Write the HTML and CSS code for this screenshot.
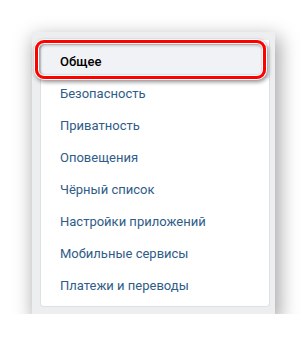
FILE: index.html
```html
<!DOCTYPE html>
<html>
<head>
  <title>Настройки</title>
  <link rel="stylesheet" href="styles.css">
</head>
<body>
  <div class="frame">
    <div class="menu-card">
      <a class="menu-item selected">Общее</a>
      <a class="menu-item">Безопасность</a>
      <a class="menu-item">Приватность</a>
      <a class="menu-item">Оповещения</a>
      <a class="menu-item">Чёрный список</a>
      <a class="menu-item">Настройки приложений</a>
      <a class="menu-item">Мобильные сервисы</a>
      <a class="menu-item">Платежи и переводы</a>
    </div>
    <!-- red marker around the active item -->
    <div class="highlight"></div>
  </div>
</body>
</html>
```

FILE: styles.css
```css
/* Settings menu screenshot */
body {
  margin: 0;
  background-color: #fff;
  font-family: Roboto, "Liberation Sans", sans-serif;
}

.frame {
  position: relative;
  width: 243px;
  height: 282px;
  margin: 32px 0 0 32px;
  padding: 8px 5px 0 8px;
  box-sizing: border-box;
  background-color: #edeef0;
  box-shadow: 3px 7px 18px 2px rgba(0, 0, 0, 0.35);
}

.menu-card {
  height: 267px;
  padding: 6px 0;
  box-sizing: border-box;
  background-color: #fff;
  border: 1px solid #dce1e6;
  border-top: none;
  border-radius: 0 0 4px 4px;
}

.menu-item {
  display: block;
  height: 32px;
  line-height: 32px;
  padding-left: 19px;
  font-size: 13px;
  color: #2f5c88;
  text-decoration: none;
}

.menu-item.selected {
  background-color: #f0f2f5;
  color: #000;
  font-weight: 500;
}

.highlight {
  position: absolute;
  left: 3px;
  top: 8px;
  width: 231px;
  height: 39px;
  box-sizing: border-box;
  border: 3px solid #f00;
  border-radius: 9px;
  box-shadow: 0 0 0 1px #fff, 1px 2px 4px 1px rgba(0, 0, 0, 0.45),
    inset 0 0 0 1px #fff, inset 1px 1px 3px 1px rgba(0, 0, 0, 0.45);
}
```
